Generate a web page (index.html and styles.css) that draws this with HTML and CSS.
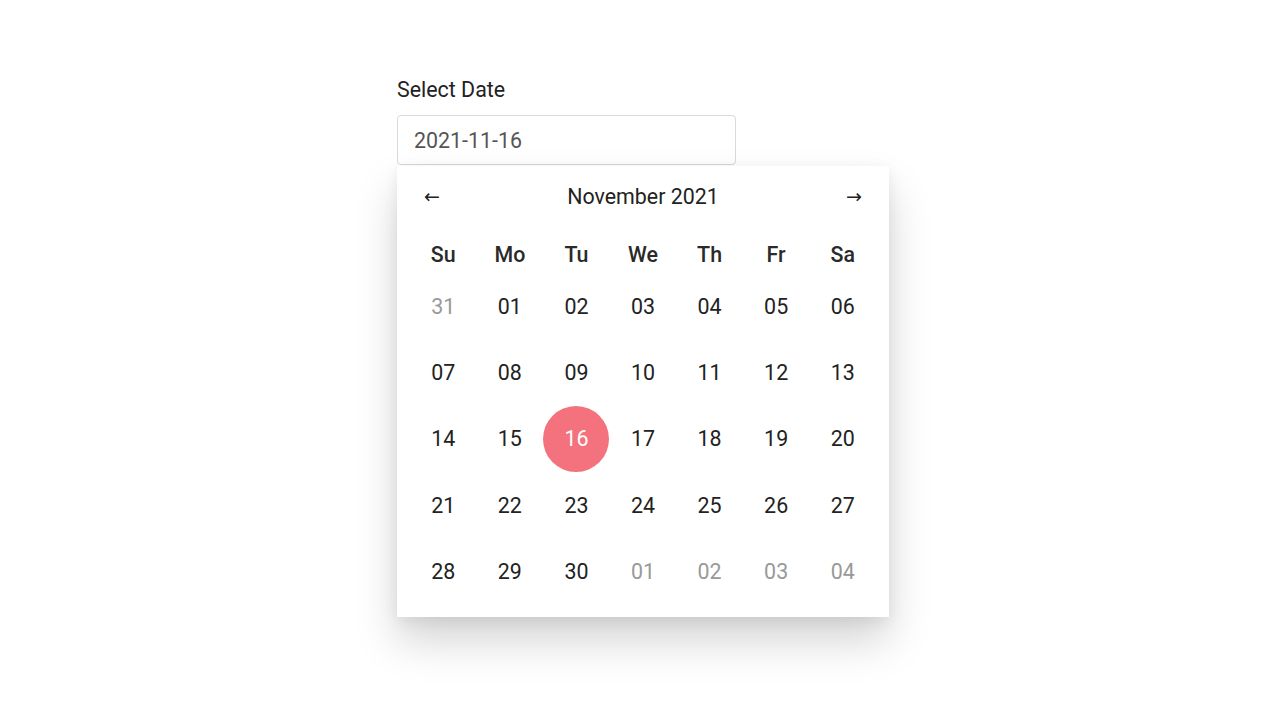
FILE: index.html
```html
<!DOCTYPE html>
<html>
<head>
<meta charset="utf-8">
<link rel="stylesheet" href="styles.css">
</head>
<body>
<div class="wrap">
  <label class="label">Select Date</label>
  <div class="input">2021-11-16</div>
  <div class="cal">
    <div class="head">
      <span class="arrow">&#8592;</span>
      <span class="month">November 2021</span>
      <span class="arrow">&#8594;</span>
    </div>
    <div class="grid wd">
      <span>Su</span><span>Mo</span><span>Tu</span><span>We</span><span>Th</span><span>Fr</span><span>Sa</span>
    </div>
    <div class="grid days">
      <span class="mute">31</span><span>01</span><span>02</span><span>03</span><span>04</span><span>05</span><span>06</span>
      <span>07</span><span>08</span><span>09</span><span>10</span><span>11</span><span>12</span><span>13</span>
      <span>14</span><span>15</span><span class="sel">16</span><span>17</span><span>18</span><span>19</span><span>20</span>
      <span>21</span><span>22</span><span>23</span><span>24</span><span>25</span><span>26</span><span>27</span>
      <span>28</span><span>29</span><span>30</span><span class="mute">01</span><span class="mute">02</span><span class="mute">03</span><span class="mute">04</span>
    </div>
  </div>
</div>
</body>
</html>
```
FILE: styles.css
```css
html, body {
  margin: 0;
  background: #fff;
}
body {
  min-height: 720px;
  font-family: Roboto, "Liberation Sans", sans-serif;
  color: #222;
}
.wrap {
  padding: 78px 0 0 397px;
  width: 492px;
}
.label {
  display: block;
  font-size: 21.4px;
  line-height: 24px;
  color: #222;
  margin-bottom: 13px;
}
.input {
  box-sizing: border-box;
  width: 339px;
  height: 50px;
  border: 1px solid #d9d9d9;
  border-radius: 4px;
  padding: 1px 16px 0;
  font-size: 21.4px;
  line-height: 48px;
  color: #555;
}
.cal {
  margin-top: 1px;
  width: 492px;
  box-sizing: border-box;
  padding: 0 13px 13px;
  background: #fff;
  box-shadow: 0 24px 40px rgba(0, 0, 0, 0.17), 0 4px 14px rgba(0, 0, 0, 0.07);
}
.head {
  height: 60px;
  display: flex;
  align-items: center;
  justify-content: space-between;
  padding: 0 14px 0 14px;
  font-size: 21.4px;
}
.arrow {
  font-family: "DejaVu Sans", sans-serif;
  font-size: 19px;
  color: #222;
}
.month {
  color: #222;
}
.grid {
  display: grid;
  grid-template-columns: repeat(7, 1fr);
  text-align: center;
  font-size: 21.4px;
}
.wd {
  padding-top: 10px;
  height: 37px;
  font-weight: 500;
  line-height: 37px;
  color: #2a2a2a;
}
.days span {
  height: 66.3px;
  display: flex;
  align-items: center;
  justify-content: center;
  color: #222;
}
.days span.mute {
  color: #999;
}
.days span.sel {
  color: #fff;
  background: #f4717e;
  border-radius: 50%;
  width: 66px;
  margin: 0 auto;
}
```
